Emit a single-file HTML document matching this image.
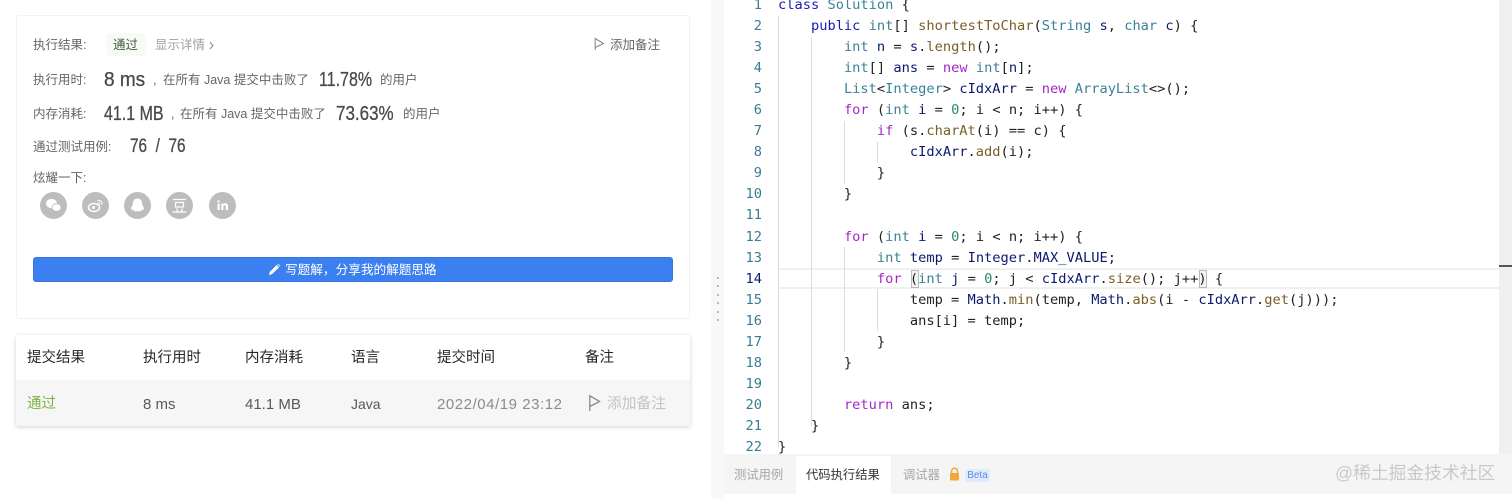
<!DOCTYPE html>
<html><head><meta charset="utf-8">
<style>
*{box-sizing:border-box}
html,body{margin:0;padding:0;width:1512px;height:499px;overflow:hidden;background:#fff;font-family:"Liberation Sans","Noto Sans CJK SC",sans-serif;color:#595959}
.a{position:absolute;white-space:nowrap}
.l{font-size:12.5px;color:#666;line-height:18px}
.b{font-size:20px;color:#4a4a4a;line-height:24px;transform-origin:left center;-webkit-text-stroke:.3px #4a4a4a}
.ic{position:absolute;top:192px;width:27px;height:27px;border-radius:50%;background:#bdbdbd}
.ic svg{position:absolute;left:0;top:0}
.h{font-size:14.5px;color:#262626;top:348px;line-height:20px}
.c{font-size:15px;color:#595959;top:395px;line-height:20px}
.code{position:absolute;left:778px;top:-5px;font-family:"DejaVu Sans Mono","Liberation Mono",monospace;font-size:13.7px;line-height:21.05px;color:#222;white-space:pre;z-index:2}
.n{position:absolute;left:726px;width:36px;top:-5px;text-align:right;font-family:"DejaVu Sans Mono",monospace;font-size:13.7px;line-height:21.05px;color:#3a7d92;white-space:pre;z-index:2}
.k{color:#1a1ab8}.t{color:#3a8296}.v{color:#0a1a70}.f{color:#795e26}.m{color:#a626c8}.d{color:#2a8a68}
.g{position:absolute;width:1px;background:#dcdcdc;z-index:1}
.dot{position:absolute;left:717px;width:2px;height:2px;background:#bbb}
</style></head><body>

<div class="a" style="left:16px;top:15px;width:674px;height:304px;border:1px solid #f2f2f2;border-radius:3px;background:#fff"></div>

<div class="a l" style="left:33px;top:36px">执行结果:</div>
<div class="a" style="left:106px;top:33px;width:40px;height:23px;background:#f7faf5;border-radius:4px"></div>
<div class="a" style="left:113px;top:36px;font-size:12.5px;color:#3f5a3a;line-height:18px">通过</div>
<div class="a" style="left:155px;top:36px;font-size:12.5px;color:#a0a0a0;line-height:18px">显示详情</div>
<svg class="a" style="left:209px;top:41px" width="6" height="9"><path d="M1 1l3 3.5L1 8" fill="none" stroke="#888" stroke-width="1"/></svg>
<svg class="a" style="left:594px;top:37px" width="11" height="14"><path d="M1.2 13V1.5L9.5 6.5 1.2 10.5" fill="none" stroke="#8a8a8a" stroke-width="1.1"/></svg>
<div class="a l" style="left:610px;top:36px">添加备注</div>

<div class="a l" style="left:33px;top:71px">执行用时:</div>
<div class="a b" style="left:104px;top:68px;transform:scaleX(.95)">8 ms</div>
<div class="a l" style="left:153px;top:71px;white-space:pre">,</div>
<div class="a l" style="left:163px;top:71px">在所有 Java 提交中击败了</div>
<div class="a b" style="left:319px;top:68px;transform:scaleX(.8)">11.78%</div>
<div class="a l" style="left:380px;top:71px">的用户</div>

<div class="a l" style="left:33px;top:105px">内存消耗:</div>
<div class="a b" style="left:104px;top:102px;transform:scaleX(.8)">41.1 MB</div>
<div class="a l" style="left:171px;top:105px">,</div>
<div class="a l" style="left:180px;top:105px">在所有 Java 提交中击败了</div>
<div class="a b" style="left:336px;top:102px;transform:scaleX(.85)">73.63%</div>
<div class="a l" style="left:403px;top:105px">的用户</div>

<div class="a l" style="left:33px;top:138px">通过测试用例:</div>
<div class="a b" style="left:130px;top:135px;font-size:19px;transform:scaleX(.81);white-space:pre">76  /  76</div>

<div class="a l" style="left:33px;top:169px">炫耀一下:</div>

<div class="ic" style="left:40px"><svg width="27" height="27"><ellipse cx="11.5" cy="11.5" rx="5.5" ry="4.6" fill="#fff"/><ellipse cx="16.5" cy="15.5" rx="4.6" ry="3.8" fill="#fff" stroke="#bdbdbd" stroke-width=".8"/></svg></div>
<div class="ic" style="left:82px"><svg width="27" height="27"><ellipse cx="12" cy="15.5" rx="5.5" ry="4" fill="none" stroke="#fff" stroke-width="1.5"/><circle cx="11.5" cy="15.5" r="1.5" fill="#fff"/><path d="M15.5 8.5c3-.8 5 1.4 4.3 4.2M15.8 10.8c1.4-.3 2.2.5 1.9 1.8" fill="none" stroke="#fff" stroke-width="1"/></svg></div>
<div class="ic" style="left:124px"><svg width="27" height="27"><path d="M13.5 6.5c3 0 4.6 2.3 4.6 5 0 1 .3 1.6 1 2.8.9 1.5 1.2 3.2.4 3.6-.5.2-1-.3-1.4-.9-.2.9-.6 1.6-1.1 2-1.5.6-2.5.3-3.5.1-1 .2-2 .5-3.5-.1-.5-.4-.9-1.1-1.1-2-.4.6-.9 1.1-1.4.9-.8-.4-.5-2.1.4-3.6.7-1.2 1-1.8 1-2.8 0-2.7 1.6-5 4.6-5z" fill="#fff"/></svg></div>
<div class="ic" style="left:166px"><svg width="27" height="27"><path d="M7 7.5h13M9.5 10.5h8v4.5h-8zM10.5 16.5l1.2 3M16.5 16.5l-1.2 3M6.5 20h14" fill="none" stroke="#fff" stroke-width="1.2"/></svg></div>
<div class="ic" style="left:209px"><svg width="27" height="27"><path d="M8.5 11.5h2.2V18H8.5zM8.5 8.5h2.2v1.9H8.5zM12.2 11.5h2.1v.9c.5-.7 1.2-1.1 2.2-1.1 1.7 0 2.5 1.1 2.5 2.9V18h-2.2v-3.4c0-.9-.3-1.4-1.1-1.4s-1.3.5-1.3 1.4V18h-2.2z" fill="#fff"/></svg></div>

<div class="a" style="left:33px;top:257px;width:640px;height:25px;background:#3b7ff0;border:1px solid #3674dc;border-radius:3px"></div>
<svg class="a" style="left:268px;top:263px" width="13" height="13"><path d="M1 12l.7-3L8.6 2l2.4 2.4L4 11.3zM9.4 1.2l.7-.5 2.2 2.2-.5.7z" fill="#fff"/></svg>
<div class="a" style="left:285px;top:261px;font-size:12.65px;color:#fff;line-height:18px">写题解，分享我的解题思路</div>

<div class="a" style="left:16px;top:335px;width:674px;height:91px;background:#fff;box-shadow:0 1px 5px rgba(0,0,0,.18);border-radius:2px"></div>
<div class="a" style="left:16px;top:380px;width:674px;height:46px;background:#f6f6f6"></div>
<div class="a h" style="left:27px">提交结果</div>
<div class="a h" style="left:143px">执行用时</div>
<div class="a h" style="left:245px">内存消耗</div>
<div class="a h" style="left:351px">语言</div>
<div class="a h" style="left:437px">提交时间</div>
<div class="a h" style="left:585px">备注</div>
<div class="a c" style="left:27px;top:394px;color:#7cb342;font-size:14.5px">通过</div>
<div class="a c" style="left:143px">8 ms</div>
<div class="a c" style="left:245px">41.1 MB</div>
<div class="a c" style="left:351px;top:394px;font-size:14px">Java</div>
<div class="a c" style="left:437px;color:#8c8c8c;letter-spacing:.55px">2022/04/19 23:12</div>
<svg class="a" style="left:588px;top:394px" width="14" height="18"><path d="M1.8 17V1.8L11.5 7.5 1.8 12.5" fill="none" stroke="#8a8a8a" stroke-width="1.3"/></svg>
<div class="a c" style="left:607px;top:394px;color:#c4c4c4;font-size:14.75px">添加备注</div>

<div class="a" style="left:711px;top:0;width:13px;height:499px;background:#f8f8f8"></div>
<div class="dot" style="top:277px"></div><div class="dot" style="top:285px"></div><div class="dot" style="top:294px"></div><div class="dot" style="top:302px"></div><div class="dot" style="top:311px"></div><div class="dot" style="top:319px"></div>

<div class="a" style="left:1499px;top:0;width:13px;height:455px;background:#f0f0f0"></div>
<div class="a" style="left:1499px;top:265px;width:13px;height:2px;background:#555"></div>

<div class="a" style="left:779px;top:268px;width:720px;height:21px;border-top:2px solid #f0f0f0;border-bottom:2px solid #f0f0f0;z-index:1"></div>

<div class="g" style="left:778px;top:16px;height:431px"></div>
<div class="g" style="left:811px;top:37px;height:389px"></div>
<div class="g" style="left:844px;top:121px;height:63px"></div>
<div class="g" style="left:877px;top:142px;height:21px"></div>
<div class="g" style="left:844px;top:247px;height:105px"></div>
<div class="g" style="left:877px;top:289px;height:42px"></div>
<div class="a" style="left:911px;top:270px;width:8px;height:18px;border:1px solid #bbb;background:#f4f4f4;z-index:1"></div>
<div class="a" style="left:1199px;top:270px;width:8px;height:18px;border:1px solid #bbb;background:#f4f4f4;z-index:1"></div>

<div class="n">1
2
3
4
5
6
7
8
9
10
11
12
13
<span style="color:#0b216f">14</span>
15
16
17
18
19
20
21
22</div>

<div class="code"><span class="k">class</span> <span class="t">Solution</span> {
    <span class="k">public</span> <span class="t">int</span>[] <span class="f">shortestToChar</span>(<span class="t">String</span> <span class="v">s</span>, <span class="t">char</span> <span class="v">c</span>) {
        <span class="t">int</span> <span class="v">n</span> = <span class="v">s</span>.<span class="f">length</span>();
        <span class="t">int</span>[] <span class="v">ans</span> = <span class="m">new</span> <span class="t">int</span>[<span class="v">n</span>];
        <span class="t">List</span>&lt;<span class="t">Integer</span>&gt; <span class="v">cIdxArr</span> = <span class="m">new</span> <span class="t">ArrayList</span>&lt;&gt;();
        <span class="m">for</span> (<span class="t">int</span> <span class="v">i</span> = <span class="d">0</span>; i &lt; n; i++) {
            <span class="m">if</span> (s.<span class="f">charAt</span>(i) == c) {
                <span class="v">cIdxArr</span>.<span class="f">add</span>(i);
            }
        }

        <span class="m">for</span> (<span class="t">int</span> <span class="v">i</span> = <span class="d">0</span>; i &lt; n; i++) {
            <span class="t">int</span> <span class="v">temp</span> = <span class="v">Integer</span>.<span class="v">MAX_VALUE</span>;
            <span class="m">for</span> (<span class="t">int</span> <span class="v">j</span> = <span class="d">0</span>; j &lt; <span class="v">cIdxArr</span>.<span class="f">size</span>(); j++) {
                temp = <span class="v">Math</span>.<span class="f">min</span>(temp, <span class="v">Math</span>.<span class="f">abs</span>(i - <span class="v">cIdxArr</span>.<span class="f">get</span>(j)));
                ans[i] = temp;
            }
        }

        <span class="m">return</span> ans;
    }
}</div>

<div class="a" style="left:724px;top:454px;width:788px;height:40px;background:#f5f5f5;z-index:3"></div>
<div class="a" style="left:796px;top:456px;width:95px;height:38px;background:#fff;z-index:3"></div>
<div class="a" style="left:734px;top:466px;font-size:12.3px;color:#a6a6a6;line-height:18px;z-index:4">测试用例</div>
<div class="a" style="left:806px;top:466px;font-size:12.3px;color:#333;line-height:18px;z-index:4">代码执行结果</div>
<div class="a" style="left:903px;top:466px;font-size:12.3px;color:#a6a6a6;line-height:18px;z-index:4">调试器</div>
<svg class="a" style="left:948px;top:467px;z-index:4" width="13" height="15"><path d="M3.5 6V4.2a3 3 0 0 1 6 0V6" fill="none" stroke="#f0a63c" stroke-width="1.5"/><rect x="2" y="6" width="9" height="7.5" rx="1" fill="#f0a63c"/></svg>
<div class="a" style="left:965px;top:469px;width:25px;height:13px;background:#dfeafc;border-radius:3px;font-size:10px;line-height:13px;color:#5b8fe0;text-align:center;z-index:4">Beta</div>
<div class="a" style="left:1335px;top:460px;font-size:17.8px;color:#c9c9c9;line-height:26px;z-index:4">@稀土掘金技术社区</div>

</body></html>
